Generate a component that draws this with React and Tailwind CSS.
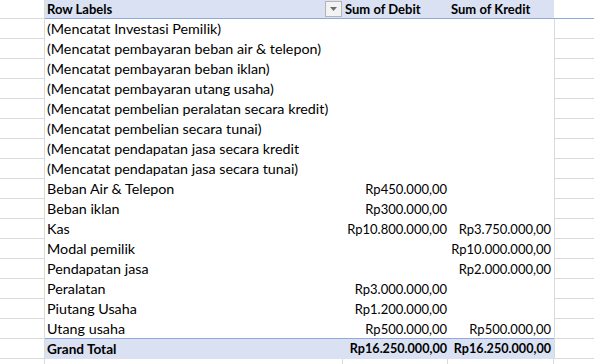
import React from 'react';

const rows = [
  { label: '(Mencatat Investasi Pemilik)' },
  { label: '(Mencatat pembayaran beban air & telepon)' },
  { label: '(Mencatat pembayaran beban iklan)' },
  { label: '(Mencatat pembayaran utang usaha)' },
  { label: '(Mencatat pembelian peralatan secara kredit)' },
  { label: '(Mencatat pembelian secara tunai)' },
  { label: '(Mencatat pendapatan jasa secara kredit' },
  { label: '(Mencatat pendapatan jasa secara tunai)' },
  { label: 'Beban Air & Telepon', debit: 'Rp450.000,00' },
  { label: 'Beban iklan', debit: 'Rp300.000,00' },
  { label: 'Kas', debit: 'Rp10.800.000,00', kredit: 'Rp3.750.000,00' },
  { label: 'Modal pemilik', kredit: 'Rp10.000.000,00' },
  { label: 'Pendapatan jasa', kredit: 'Rp2.000.000,00' },
  { label: 'Peralatan', debit: 'Rp3.000.000,00' },
  { label: 'Piutang Usaha', debit: 'Rp1.200.000,00' },
  { label: 'Utang usaha', debit: 'Rp500.000,00', kredit: 'Rp500.000,00' },
];

const SideCell = () => <div className="h-full border-r border-b border-[#dadada]" />;
const EdgeCell = () => <div className="h-full border-l border-b border-[#dadada]" />;

const App = () => {
  return (
    <div
      className="w-[594px] h-[364px] overflow-hidden bg-white text-[14.3px] text-black"
      style={{ fontFamily: 'Lato, "Open Sans", sans-serif' }}
    >
      <div className="grid grid-cols-[45px_298px_105px_106px_40px]">
        {/* header */}
        <div className="h-[19px] border-r border-b border-[#dadada]" />
        <div className="h-[19px] bg-[#d9e1f2] border-b border-[#8ea9db] flex items-center justify-between pl-[2px] pr-[1px] font-bold text-[13px]">
          <span className="leading-[18px]">Row Labels</span>
          <div className="w-[17px] h-[16px] mb-[1px] bg-[#f3f3f3] border border-[#b4b4b4] flex items-center justify-center">
            <svg width="7" height="4" viewBox="0 0 7 4">
              <path d="M0 0h7L3.5 4z" fill="#6d6d6d" />
            </svg>
          </div>
        </div>
        <div className="h-[19px] bg-[#d9e1f2] border-b border-[#8ea9db] pl-[2px] font-bold text-[13px] leading-[18px]">Sum of Debit</div>
        <div className="h-[19px] bg-[#d9e1f2] border-b border-[#8ea9db] pl-[3px] font-bold text-[13px] leading-[18px]">Sum of Kredit</div>
        <div className="h-[19px] border-b border-[#8ea9db]" />

        {rows.map((r, i) => {
          const last = i === rows.length - 1;
          const pb = last ? 'border-b border-[#8ea9db]' : '';
          return (
            <React.Fragment key={i}>
              <div className="h-[20px]"><SideCell /></div>
              <div className={`h-[20px] pl-[2px] leading-[20px] whitespace-nowrap ${pb}`}>{r.label}</div>
              <div className={`h-[20px] pr-[1px] text-right text-[13px] leading-[20px] ${pb}`}>{r.debit}</div>
              <div className={`h-[20px] pr-[3px] text-right text-[13px] leading-[20px] ${pb}`}>{r.kredit}</div>
              <div className="h-[20px]"><EdgeCell /></div>
            </React.Fragment>
          );
        })}

        {/* grand total */}
        <div className="h-[20px]"><SideCell /></div>
        <div className="h-[20px] bg-[#d9e1f2] pl-[2px] font-bold text-[13.6px] leading-[20px]">Grand Total</div>
        <div className="h-[20px] bg-[#d9e1f2] pr-[1px] text-right font-bold text-[12.6px] leading-[20px]">Rp16.250.000,00</div>
        <div className="h-[20px] bg-[#d9e1f2] pr-[3px] text-right font-bold text-[12.6px] leading-[20px]">Rp16.250.000,00</div>
        <div className="h-[20px]"><EdgeCell /></div>

        {/* partial row below */}
        <div className="h-[20px] border-r border-[#dadada]" />
        <div className="h-[20px] border-r border-[#dadada]" />
        <div className="h-[20px] border-r border-[#dadada]" />
        <div className="h-[20px] border-r border-[#dadada]" />
        <div className="h-[20px]" />
      </div>
    </div>
  );
};

export default App;
